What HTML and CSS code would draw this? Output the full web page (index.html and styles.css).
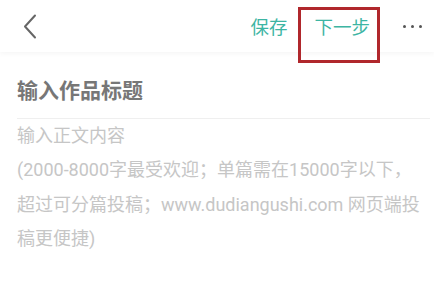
FILE: index.html
```html
<!DOCTYPE html>
<html lang="zh-CN">
<head>
    <meta charset="UTF-8">
    <meta name="viewport" content="width=device-width, initial-scale=1.0">
    <title>写作品</title>
    <link rel="stylesheet" href="styles.css">
</head>
<body>
    <div class="topbar">
        <button class="back">
            <svg width="14" height="26" viewBox="0 0 14 26">
                <path d="M12 1.5 L2 12.5 L12 23.5" fill="none" stroke="#666" stroke-width="2" stroke-linecap="round" stroke-linejoin="round"/>
            </svg>
        </button>
        <div class="actions">
            <span class="save">保存</span>
            <span class="next">下一步</span>
            <span class="more"><i></i><i></i><i></i></span>
        </div>
        <div class="mark"></div>
    </div>

    <div class="editor">
        <div class="title">输入作品标题</div>
        <div class="content">
            输入正文内容<br>
            (2000-8000字最受欢迎；单篇需在15000字以下，<br>
            超过可分篇投稿；www.dudiangushi.com 网页端投<br>
            稿更便捷)
        </div>
    </div>
</body>
</html>
```

FILE: styles.css
```css
body {
    margin: 0;
    background: #fff;
    font-family: "Roboto", "Noto Sans CJK SC", sans-serif;
}
.topbar {
    position: relative;
    height: 52px;
    display: flex;
    align-items: center;
    box-shadow: 0 2px 5px rgba(0, 0, 0, 0.04);
}
.back {
    border: 0;
    background: none;
    padding: 0;
    margin-left: 23px;
    margin-top: 1px;
    display: flex;
}
.actions {
    margin-left: auto;
    display: flex;
    align-items: center;
    color: #3db5a3;
    font-size: 18.5px;
}
.save {
    margin-right: 27px;
}
.next {
    margin-right: 33px;
}
.more {
    display: flex;
    gap: 5px;
    margin-right: 12px;
    margin-top: 1px;
}
.more i {
    width: 3px;
    height: 3px;
    border-radius: 50%;
    background: #555;
}
.mark {
    position: absolute;
    left: 298px;
    top: 7px;
    width: 76px;
    height: 50px;
    border: 3px solid #b0272c;
}
.editor {
    padding: 24px 4px 0 17px;
}
.title {
    font-size: 21px;
    font-weight: bold;
    color: #777;
    line-height: 30px;
    padding-bottom: 12px;
    border-bottom: 1px solid #efefef;
}
.content {
    font-size: 18px;
    line-height: 34.3px;
    color: #c6c6c6;
    white-space: nowrap;
}
```
